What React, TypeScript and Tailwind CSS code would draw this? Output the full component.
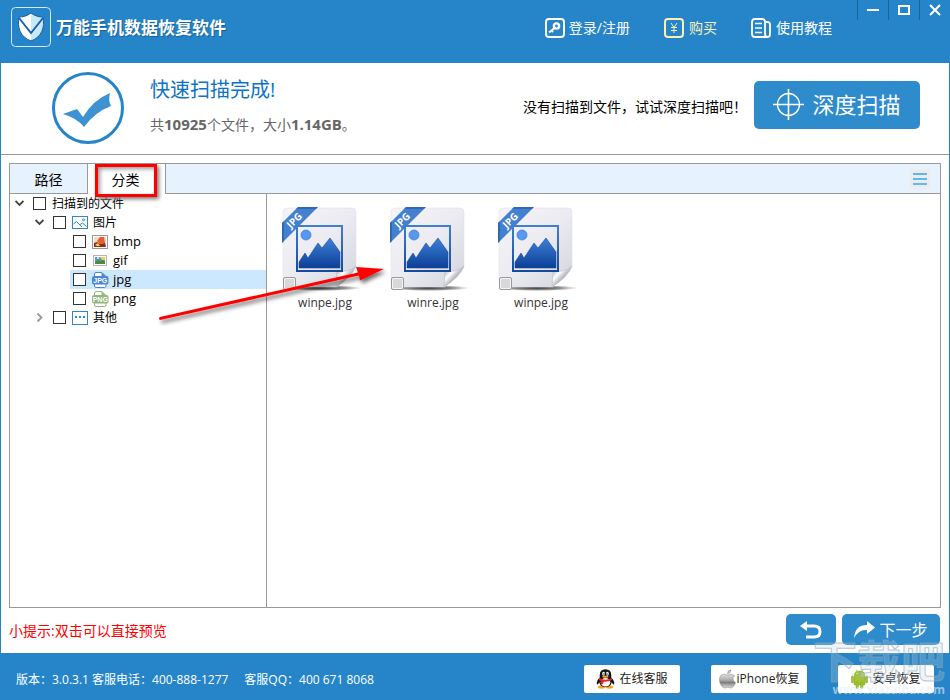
import React, { useState } from 'react';

const FONT = "font-['Open_Sans','Noto_Sans_CJK_SC',sans-serif]";

const LogoIcon = () => (
    <svg width="40" height="40" viewBox="0 0 40 40" fill="none">
        <defs>
            <linearGradient id="shield" x1="0" x2="1">
                <stop offset="0.5" stopColor="#fff" />
                <stop offset="0.5" stopColor="#c8eaf8" />
            </linearGradient>
        </defs>
        <rect x="0.5" y="0.5" width="39" height="39" rx="4" stroke="#d5e9f6" />
        <path d="M20 6 C16 9 12 10 8 10 C6 20 9 30 20 34 C31 30 34 20 32 10 C28 10 24 9 20 6Z" fill="url(#shield)" stroke="#1a5fae" strokeWidth="1" />
        <path d="M8 11 L20 26 L32 11" stroke="#1a5fae" strokeWidth="2" />
    </svg>
);

const LoginIcon = () => (
    <svg width="20" height="20" viewBox="0 0 20 20" fill="none" stroke="#fff" strokeWidth="2">
        <rect x="1" y="1" width="18" height="18" rx="3" />
        <circle cx="11.5" cy="8" r="2.6" strokeWidth="2.4" />
        <path d="M9.5 10 L4 14.5 M6.5 12.5 L8 14" />
    </svg>
);

const BuyIcon = () => (
    <svg width="20" height="20" viewBox="0 0 20 20" fill="none" stroke="#fbeeb6">
        <rect x="1" y="1" width="18" height="18" rx="3" strokeWidth="2" />
        <path d="M7 5 L10 9.5 L13 5 M10 9.5 V15 M7 9.5 H13 M7 12.5 H13" strokeWidth="1" />
    </svg>
);

const GuideIcon = () => (
    <svg width="20" height="20" viewBox="0 0 20 20" fill="none" stroke="#fff">
        <path d="M16.5 19 H4 Q1 19 1 16 V4 Q1 1 4 1 H11 Q14 1 14 4 V16 Q14 19 16.5 19 Q19 19 19 16 V6 Q19 4 16 4 H14" strokeWidth="1.8" />
        <path d="M4 5.5 H11 M4 10 H11 M4 14.5 H11" strokeWidth="1.4" />
    </svg>
);

const DoneIcon = () => (
    <svg width="72" height="72" viewBox="0 0 72 72" fill="none">
        <circle cx="36" cy="36" r="34.5" stroke="#2685c8" strokeWidth="3" />
        <path d="M11 42 L25 37 L31 45 Q41 28 58 21 Q56 28 59 34 Q43 40 32 55 Q25 46 11 42Z" fill="#3d92d1" />
    </svg>
);

const TargetIcon = () => (
    <svg width="31" height="31" viewBox="0 0 31 31" fill="none" stroke="#fff" strokeWidth="1.3">
        <circle cx="15.5" cy="15.5" r="11" />
        <path d="M15.5 0 V31 M0 15.5 H31" strokeWidth="1.6" />
    </svg>
);

const BackIcon = () => (
    <svg width="22" height="18" viewBox="0 0 22 18" fill="none">
        <path d="M5 5 H14 Q20 5 20 10.5 Q20 16 14 16 H6" stroke="#fff" strokeWidth="3" />
        <path d="M0 5 L7 0 V10Z" fill="#fff" />
    </svg>
);

const ForwardIcon = () => (
    <svg width="21" height="17" viewBox="0 0 21 17">
        <path d="M0 17 Q1 4 13 4 V0 L21 6.5 L13 13 V9 Q5 8 0 17Z" fill="#fff" />
    </svg>
);

const QQIcon = () => (
    <svg width="19" height="20" viewBox="0 0 20 21">
        <ellipse cx="6" cy="19" rx="4" ry="1.8" fill="#f8a51b" />
        <ellipse cx="14" cy="19" rx="4" ry="1.8" fill="#f8a51b" />
        <path d="M4 9 Q-0.5 13 1.2 16.5 Q3 15.5 3.5 14 Q4 19 10 19 Q16 19 16.5 14 Q17 15.5 18.8 16.5 Q20.5 13 16 9 Q17 0.3 10 0.3 Q3 0.3 4 9Z" fill="#151515" />
        <ellipse cx="10" cy="14" rx="5" ry="4.5" fill="#fff" />
        <ellipse cx="8" cy="5" rx="1.5" ry="2.1" fill="#fff" />
        <ellipse cx="12" cy="5" rx="1.5" ry="2.1" fill="#fff" />
        <circle cx="8.4" cy="5.2" r="0.7" />
        <circle cx="11.6" cy="5.2" r="0.7" />
        <ellipse cx="10" cy="8.2" rx="3.4" ry="1.1" fill="#f8a51b" />
        <path d="M3.4 9.4 Q10 13 16.6 9.4 L17 11.6 Q12 14 8 13.3 L7.5 16 L5 15.5 L5.2 12.7 L3 11.6Z" fill="#e4252a" />
    </svg>
);

const AppleIcon = () => (
    <svg width="17" height="20" viewBox="0 0 18 20">
        <defs>
            <linearGradient id="metal" x1="0" y1="0" x2="0" y2="1">
                <stop offset="0" stopColor="#e2e2e2" />
                <stop offset="0.45" stopColor="#a8a8a8" />
                <stop offset="0.6" stopColor="#7d7d7d" />
                <stop offset="1" stopColor="#e0e0e0" />
            </linearGradient>
        </defs>
        <path d="M12.5 0.3 Q9 0.8 9 4.5 Q12.5 4 12.5 0.3Z" fill="#ccc" stroke="#888" strokeWidth="0.6" />
        <path d="M9 6 Q13 3.5 16.5 6.5 Q12.5 10 17.5 14 Q15 20 12 19.5 Q9 18 6.5 19.5 Q3.5 20 1 14 Q-1 6 5 5 Q7 5 9 6Z" fill="url(#metal)" stroke="#8a8a8a" strokeWidth="0.6" />
    </svg>
);

const AndroidIcon = () => (
    <svg width="17" height="20" viewBox="0 0 17 20" fill="#a2c531" stroke="#7f9f22" strokeWidth="0.5">
        <path d="M3 6.5 Q3.3 2 8.5 2 Q13.7 2 14 6.5Z M3 7.3 H14 V15 Q14 16 13 16 H4 Q3 16 3 15Z" />
        <rect x="0.4" y="7" width="2" height="7" rx="1" />
        <rect x="14.6" y="7" width="2" height="7" rx="1" />
        <rect x="5" y="13" width="2.4" height="6.5" rx="1.2" />
        <rect x="9.6" y="13" width="2.4" height="6.5" rx="1.2" />
        <path d="M5 0.5 L6.2 2.5 M12 0.5 L10.8 2.5" stroke="#a2c531" strokeWidth="0.8" />
        <circle cx="6" cy="4.5" r="0.6" fill="#fff" stroke="none" />
        <circle cx="11" cy="4.5" r="0.6" fill="#fff" stroke="none" />
    </svg>
);

const PictureIcon = () => (
    <svg width="16" height="13" viewBox="0 0 16 13" fill="none" stroke="#2d87cf">
        <rect x="0.5" y="0.5" width="15" height="12" fill="#fff" />
        <path d="M1.5 8 L4.5 5.5 L10 11 M8 8.5 L10.5 7 L14.5 10.5" />
        <circle cx="11.5" cy="3.8" r="1" />
    </svg>
);

const OtherIcon = () => (
    <svg width="16" height="14" viewBox="0 0 16 14" fill="none">
        <rect x="0.5" y="0.5" width="15" height="13" fill="#fff" stroke="#2d87cf" />
        <path d="M3 6 H5 M7 6 H9 M11 6 H13" stroke="#2d87cf" strokeWidth="2" />
    </svg>
);

const BmpIcon = () => (
    <svg width="16" height="14" viewBox="0 0 16 14">
        <rect x="0.5" y="0.5" width="15" height="13" fill="#fff" stroke="#999" />
        <rect x="2" y="2" width="12" height="10" fill="#efdcc4" />
        <path d="M5 6 L8 2 H12 L13 8 L8 9Z" fill="#ea5a2a" />
        <path d="M2 8 L5 7 L8 9 L13 8 L14 12 H2Z" fill="#8c2c1c" />
        <path d="M3 10 L6 8 L8 11 H5Z" fill="#f6d24a" />
    </svg>
);

const GifIcon = () => (
    <svg width="16" height="14" viewBox="0 0 16 14">
        <rect x="1.5" y="1.5" width="13" height="10" fill="#fff" stroke="#b5b5b5" />
        <rect x="3" y="3" width="10" height="7" fill="#5b94d6" />
        <path d="M3 10 V8 L6 6 L8 7 L11 6 L13 8 V10Z" fill="#4d8a3a" />
        <path d="M8 3 H13 V6 H10Z" fill="#ecd34c" />
        <path d="M5 3 H7 V5 H5Z" fill="#d9e7a0" />
    </svg>
);

// small file badge used by the jpg and png rows
const BadgeIcon = ({ label, color }: { label: string; color: string }) => (
    <svg width="17" height="16" viewBox="0 0 17 16">
        <path d="M2.5 5 V2 Q2.5 0.5 4 0.5 H10 L14 4.5 V5 M2.5 11 V14 Q2.5 15.5 4 15.5 H12.5 Q14 15.5 14 14 V11" fill="#fff" stroke={color} />
        <path d="M9.5 0.5 L14 4.5 H9.5Z" fill={color} />
        <rect x="0" y="4" width="16.5" height="8.5" rx="2" fill={color} />
        <text x="8.3" y="11" textAnchor="middle" fontSize="7" fontWeight="700" fill="#fff" fontFamily="Liberation Sans">{label}</text>
    </svg>
);

const JpgFileIcon = () => (
    <svg width="82" height="86" viewBox="0 0 82 86">
        <defs>
            <linearGradient id="paper" x1="0" y1="0" x2="1" y2="1">
                <stop offset="0" stopColor="#f4f4f8" />
                <stop offset="0.5" stopColor="#ebebf1" />
                <stop offset="1" stopColor="#d3d3dd" />
            </linearGradient>
            <linearGradient id="hills" x1="0" y1="0" x2="0" y2="1">
                <stop offset="0" stopColor="#3f80d8" />
                <stop offset="1" stopColor="#0c3f97" />
            </linearGradient>
            <linearGradient id="frame" x1="0" y1="0" x2="0" y2="1">
                <stop offset="0" stopColor="#3f7fd0" />
                <stop offset="1" stopColor="#164a9f" />
            </linearGradient>
            <radialGradient id="ground">
                <stop offset="0" stopColor="#333" />
                <stop offset="0.6" stopColor="#444" stopOpacity="0.6" />
                <stop offset="1" stopColor="#555" stopOpacity="0" />
            </radialGradient>
            <linearGradient id="curl" x1="0" y1="0" x2="1" y2="1">
                <stop offset="0" stopColor="#8f8f98" />
                <stop offset="0.35" stopColor="#fff" />
                <stop offset="0.55" stopColor="#b4b4bd" />
                <stop offset="0.75" stopColor="#f4f4f8" />
            </linearGradient>
        </defs>
        <ellipse cx="40" cy="82" rx="40" ry="3" fill="url(#ground)" />
        <path d="M6 2 H71 Q75 2 75 6 V61 L56 81 H6 Q2 81 2 77 V6 Q2 2 6 2Z" fill="url(#paper)" stroke="#dedee5" strokeWidth="0.5" />
        <path d="M56 65 Q67 67 75 60 Q71 71 55 81Z" fill="url(#curl)" stroke="#b9b9c2" strokeWidth="0.6" />
        <path d="M17 1 H37 L1 37 V17Z" fill="#4380d0" />
        <path d="M17 1 H37 L35 3 H15Z M1 37 V17 L3 15 V35Z" fill="#2458a3" opacity="0.6" />
        <text x="13" y="14" transform="rotate(-45 13 14)" textAnchor="middle" dominantBaseline="central" fontSize="10" fontWeight="700" fill="#fff" fontFamily="Open Sans">JPG</text>
        <rect x="16" y="20" width="45" height="45" fill="none" stroke="url(#frame)" strokeWidth="2" />
        <circle cx="25" cy="29" r="5" fill="#5899f0" stroke="#3d77c8" strokeWidth="0.7" />
        <path d="M18 62 V56 L24 47 L27 52 L37 37 L41 42 L49 32 L59 46 V62Z" fill="url(#hills)" stroke="#1c4b9c" strokeWidth="0.6" />
    </svg>
);

const Chevron = ({ open }: { open: boolean }) => (
    <svg width="9" height="9" viewBox="0 0 9 9" fill="none" stroke={open ? '#444' : '#999'} strokeWidth="1.8">
        <path d={open ? 'M0.5 2 L4.5 6 L8.5 2' : 'M2.5 0.5 L6.5 4.5 L2.5 8.5'} />
    </svg>
);

interface TreeRow {
    id: string;
    label: string;
    indent: string;
    open?: boolean;
    icon?: React.ReactNode;
}

const TREE: TreeRow[] = [
    { id: 'all', label: '扫描到的文件', indent: 'ml-1', open: true },
    { id: 'image', label: '图片', indent: 'ml-6', open: true, icon: <PictureIcon /> },
    { id: 'bmp', label: 'bmp', indent: 'ml-15', icon: <BmpIcon /> },
    { id: 'gif', label: 'gif', indent: 'ml-15', icon: <GifIcon /> },
    { id: 'jpg', label: 'jpg', indent: 'ml-15', icon: <BadgeIcon label="JPG" color="#4a86d8" /> },
    { id: 'png', label: 'png', indent: 'ml-15', icon: <BadgeIcon label="PNG" color="#93b67c" /> },
    { id: 'other', label: '其他', indent: 'ml-6', open: false, icon: <OtherIcon /> },
];

const FILES = ['winpe.jpg', 'winre.jpg', 'winpe.jpg'];

const Header = () => (
    <header className="h-[63px] shrink-0 bg-[#2685c8] flex justify-between text-white">
        <div className="flex items-center pl-[10px] gap-[5px] pb-[9px]">
            <LogoIcon />
            <h1 className="text-[17px] leading-6 pt-0.5 font-bold [text-shadow:1px_1px_1px_#17609a]">万能手机数据恢复软件</h1>
        </div>
        <div className="flex">
            <nav className="flex items-center h-14 gap-[34px] mr-[25px] text-sm">
                <a href="#login" className="flex items-center gap-1"><LoginIcon />登录/注册</a>
                <a href="#buy" className="flex items-center gap-[5px] text-[#fbeeb6]"><BuyIcon />购买</a>
                <a href="#guide" className="flex items-center gap-[5px]"><GuideIcon />使用教程</a>
            </nav>
            <div className="flex h-5">
                <button aria-label="最小化" className="w-[31px] border-l border-[#17659f] flex items-center justify-center">
                    <svg width="12" height="12"><path d="M0 6 H12" stroke="#fff" strokeWidth="2" /></svg>
                </button>
                <button aria-label="最大化" className="w-[31px] border-l border-[#17659f] flex items-center justify-center">
                    <svg width="12" height="10"><rect x="1" y="1" width="10" height="8" fill="none" stroke="#fff" strokeWidth="2" /></svg>
                </button>
                <button aria-label="关闭" className="w-[30px] border-l border-[#17659f] flex items-center justify-center">
                    <svg width="12" height="12"><path d="M1 1 L11 11 M11 1 L1 11" stroke="#fff" strokeWidth="2" /></svg>
                </button>
            </div>
        </div>
    </header>
);

const Summary = () => (
    <section className="h-[92px] shrink-0 flex items-center justify-between border-b border-[#999] pl-[51px] pr-[29px]">
        <div className="flex items-center gap-[26px] pb-[2px]">
            <DoneIcon />
            <div className="mb-1">
                <h2 className="text-xl leading-7 text-[#0d73c7]">快速扫描完成!</h2>
                <p className="mt-[10px] text-sm leading-5 text-[#666]">共<b className="text-[15px]">10925</b>个文件，大小<b className="text-[15px]">1.14GB</b>。</p>
            </div>
        </div>
        <div className="flex items-center gap-[7px] mb-2">
            <span className="text-sm text-black pt-1">没有扫描到文件，试试深度扫描吧！</span>
            <button className="w-[166px] h-12 rounded-[5px] bg-[#2e8bcc] text-white text-[22px] flex items-center justify-center gap-2">
                <TargetIcon />深度扫描
            </button>
        </div>
    </section>
);

const App: React.FC = () => {
    const [tab, setTab] = useState('type');
    const [selected, setSelected] = useState('jpg');

    return (
        <div className={`relative min-h-screen flex flex-col bg-white border-x border-[#2685c8] ${FONT}`}>
            <Header />
            <Summary />

            <main className="flex-1 flex flex-col mx-2 mt-2 border border-[#999]">
                <div className="flex h-[30px] shrink-0 bg-[#e6f2fe] border-b border-[#999] text-sm text-black">
                    <button onClick={() => setTab('path')} className="w-[78px] border-r border-[#999] pt-0.5">路径</button>
                    <button onClick={() => setTab('type')} className="relative w-[78px] h-[30px] border-r border-[#999] bg-white pt-0.5 pr-0.5">
                        分类
                        {tab === 'type' && <span className="absolute left-[7px] top-0 w-[62px] h-[33px] border-3 border-[#f00] shadow-[2px_2px_4px_#777,inset_2px_2px_4px_#999]" />}
                    </button>
                    <div className="flex-1 flex items-center justify-end pr-[10px]">
                        <button aria-label="列表" className="w-5 h-5 bg-[#ececec] flex items-center justify-center">
                            <svg width="14" height="12"><path d="M0 1 H14 M0 6 H14 M0 11 H14" stroke="#5bb8fd" strokeWidth="2" /></svg>
                        </button>
                    </div>
                </div>

                <div className="flex-1 flex">
                    <ul className="w-[257px] shrink-0 border-r border-[#999] text-black">
                        {TREE.map((row) => (
                            <li key={row.id} className="flex">
                                <label
                                    onClick={() => setSelected(row.id)}
                                    className={`${row.indent} flex-1 h-[19px] flex items-center whitespace-nowrap ${selected === row.id ? 'bg-[#cce8ff]' : ''}`}
                                >
                                    {row.open !== undefined && <span className="w-[19px] pl-px"><Chevron open={row.open} /></span>}
                                    <input type="checkbox" className={`appearance-none w-[13px] h-[13px] border border-[#333] bg-white checked:bg-[#2685c8] ${row.open === undefined ? 'ml-[3px]' : ''}`} />
                                    {row.icon && <span className="w-[17px] ml-[6px]">{row.icon}</span>}
                                    <span className={`${row.icon ? 'ml-1' : 'ml-[6px]'} ${row.open === undefined ? 'text-[13px]' : 'text-xs'}`}>{row.label}</span>
                                </label>
                            </li>
                        ))}
                    </ul>

                    <div className="flex flex-wrap content-start pl-1 pt-3">
                        {FILES.map((name, i) => (
                            <label key={i} className="relative w-[108px] text-xs text-[#333]">
                                <span className="block pl-[10px] pb-px"><JpgFileIcon /></span>
                                <input type="checkbox" className="absolute left-3 top-[71px] appearance-none w-[13px] h-[13px] border border-[#999] rounded-xs bg-[#d8d8d8] shadow-[inset_0_0_0_1px_#f4f4f4] checked:bg-[#2685c8]" />
                                <span className="block text-center leading-5">{name}</span>
                            </label>
                        ))}
                    </div>
                </div>
            </main>

            <div className="h-[45px] shrink-0 flex items-center justify-between pl-2 pr-[9px]">
                <p className="text-sm text-[#f00]">小提示:双击可以直接预览</p>
                <div className="flex gap-[6px] pb-[2px]">
                    <button aria-label="返回" className="w-[50px] h-[31px] rounded-[5px] bg-[#2e8bcc] flex items-center justify-center"><BackIcon /></button>
                    <button className="w-[98px] h-[31px] rounded-[5px] bg-[#2e8bcc] text-white text-base flex items-center justify-center gap-1"><ForwardIcon />下一步</button>
                </div>
            </div>

            <footer className="h-[47px] shrink-0 bg-[#2685c8] flex items-center justify-between pl-[15px] pr-[15px] pt-1 text-xs">
                <div className="flex gap-4 pt-0.5 text-white">
                    <p>版本：3.0.3.1 客服电话：400-888-1277</p>
                    <p>客服QQ：400 671 8068</p>
                </div>
                <div className="flex gap-[31px] text-[#222]">
                    <button className="w-24 h-7 rounded-xs bg-white flex items-center justify-center gap-1"><QQIcon />在线客服</button>
                    <button className="w-24 h-7 rounded-xs bg-white flex items-center justify-center gap-px"><AppleIcon />iPhone恢复</button>
                    <button className="w-24 h-7 rounded-xs bg-white flex items-center justify-center gap-1"><AndroidIcon />安卓恢复</button>
                </div>
            </footer>

            {/* pointer from the file type to its preview */}
            <svg className="absolute left-[150px] top-[255px] pointer-events-none" width="245" height="75">
                <defs>
                    <filter id="soft"><feDropShadow dx="2" dy="3" stdDeviation="2" floodColor="#000" floodOpacity="0.6" /></filter>
                </defs>
                <path d="M9 62 L207 17.5 L205 12 L233 14 L209 25.5 L208 20.5 L9 65 Q7 63.5 9 62Z" fill="#f00" filter="url(#soft)" />
            </svg>

            {/* watermark */}
            <div className="absolute right-1 bottom-[3px] flex flex-col items-end pointer-events-none font-bold text-[#c5d5df]/25 [-webkit-text-stroke:1px_#8ba5b799]">
                <span className="text-[44px] leading-[44px]">下载吧</span>
                <span className="text-xs leading-[14px] text-[#e4edf3]/60 [-webkit-text-stroke:0px]">www.xiazaiba.com</span>
            </div>
        </div>
    );
};

export default App;
